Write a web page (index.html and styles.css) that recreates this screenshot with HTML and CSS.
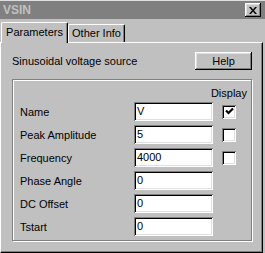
FILE: index.html
```html
<!DOCTYPE html>
<html lang="en">
<head>
	<meta charset="UTF-8">
	<title>VSIN</title>
	<link rel="stylesheet" href="styles.css">
</head>
<body>
	<div class="win">
		<!-- title bar -->
		<div class="title">
			<span class="title-text">VSIN</span>
			<span class="close">
				<svg width="8" height="7" viewBox="0 0 8 7"><path d="M0 0h2l2 2.5 2-2.5h2l-3 3.5 3 3.5h-2l-2-2.5-2 2.5h-2l3-3.5z" fill="#000"/></svg>
			</span>
		</div>

		<!-- tabs -->
		<div class="tabs">
			<div class="tab active">Parameters</div>
			<div class="tab">Other Info</div>
		</div>

		<!-- panel -->
		<div class="panel">
			<div class="head">
				<span>Sinusoidal voltage source</span>
				<span class="btn">Help</span>
			</div>

			<div class="group">
				<div class="display">Display</div>
				<div class="row">
					<span class="lbl">Name</span>
					<span class="field">V</span>
					<span class="check"><svg width="9" height="9" viewBox="0 0 9 9"><path d="M1 3.5l2.5 2.5 4.5-4.5" fill="none" stroke="#000" stroke-width="2.2"/></svg></span>
				</div>
				<div class="row">
					<span class="lbl">Peak Amplitude</span>
					<span class="field">5</span>
					<span class="check"></span>
				</div>
				<div class="row">
					<span class="lbl">Frequency</span>
					<span class="field">4000</span>
					<span class="check"></span>
				</div>
				<div class="row">
					<span class="lbl">Phase Angle</span>
					<span class="field">0</span>
				</div>
				<div class="row">
					<span class="lbl">DC Offset</span>
					<span class="field">0</span>
				</div>
				<div class="row">
					<span class="lbl">Tstart</span>
					<span class="field">0</span>
				</div>
			</div>
		</div>
	</div>
</body>
</html>
```

FILE: styles.css
```css
html, body {
	margin: 0;
	padding: 0;
}
body {
	background: #c0c0c0;
	font-family: "Liberation Sans", Arial, sans-serif;
	font-size: 11px;
	color: #000;
}

.win {
	width: 265px;
	height: 253px;
	background: #c0c0c0;
	overflow: hidden;
}

/* title bar */
.title {
	height: 18px;
	border-top: 1px solid #dfdfdf;
	background: #808080;
	display: flex;
	align-items: center;
	justify-content: space-between;
	padding: 0 4px 0 3px;
}
.title-text {
	color: #c0c0c0;
	font-weight: bold;
	font-size: 12px;
}
.close {
	width: 16px;
	height: 14px;
	box-sizing: border-box;
	background: #c0c0c0;
	display: flex;
	align-items: center;
	justify-content: center;
	box-shadow: inset -1px -1px #000, inset 1px 1px #fff, inset -2px -2px #808080, inset 2px 2px #dfdfdf;
}

/* tabs */
.tabs {
	display: flex;
	align-items: flex-end;
	height: 20px;
	margin-top: 3px;
	padding-left: 1px;
	position: relative;
	z-index: 1;
}
.tab {
	box-sizing: border-box;
	height: 18px;
	width: 57px;
	border-top: 1px solid #fff;
	border-left: 1px solid #fff;
	border-right: 1px solid #000;
	border-radius: 2px 2px 0 0;
	box-shadow: inset -1px 0 #808080;
	text-align: center;
	line-height: 16px;
	background: #c0c0c0;
}
.tab.active {
	width: 67px;
	height: 21px;
	margin-bottom: -1px;
	line-height: 18px;
}

/* panel */
.panel {
	width: 263px;
	height: 211px;
	box-sizing: border-box;
	border-top: 1px solid #fff;
	border-left: 1px solid #fff;
	border-right: 1px solid #000;
	border-bottom: 1px solid #000;
	box-shadow: inset -1px -1px #808080;
	padding: 9px 10px 0 11px;
}
.head {
	display: flex;
	align-items: center;
	justify-content: space-between;
	height: 18px;
}
.btn {
	width: 57px;
	height: 18px;
	box-sizing: border-box;
	display: flex;
	align-items: center;
	justify-content: center;
	box-shadow: inset -1px -1px #000, inset 1px 1px #fff, inset -2px -2px #808080, inset 2px 2px #dfdfdf;
}

/* group box */
.group {
	margin-top: 9px;
	width: 240px;
	box-sizing: border-box;
	border: 1px solid #808080;
	box-shadow: 1px 1px 0 #fff, inset 1px 1px 0 #fff;
	padding: 6px 4px 4px 7px;
}
.display {
	height: 16px;
	text-align: right;
	line-height: 14px;
}
.row {
	display: flex;
	align-items: center;
	height: 19px;
	margin-bottom: 4px;
}
.row:last-child {
	margin-bottom: 0;
}
.lbl {
	width: 114px;
}
.field {
	width: 79px;
	height: 19px;
	box-sizing: border-box;
	background: #fff;
	padding-left: 3px;
	line-height: 19px;
	box-shadow: inset 1px 1px #808080, inset -1px -1px #fff, inset 2px 2px #000, inset -2px -2px #dfdfdf;
}
.check {
	margin-left: 9px;
	width: 14px;
	height: 14px;
	box-sizing: border-box;
	background: #fff;
	display: flex;
	align-items: center;
	justify-content: center;
	box-shadow: inset 1px 1px #808080, inset -1px -1px #fff, inset 2px 2px #000, inset -2px -2px #dfdfdf;
}
```
